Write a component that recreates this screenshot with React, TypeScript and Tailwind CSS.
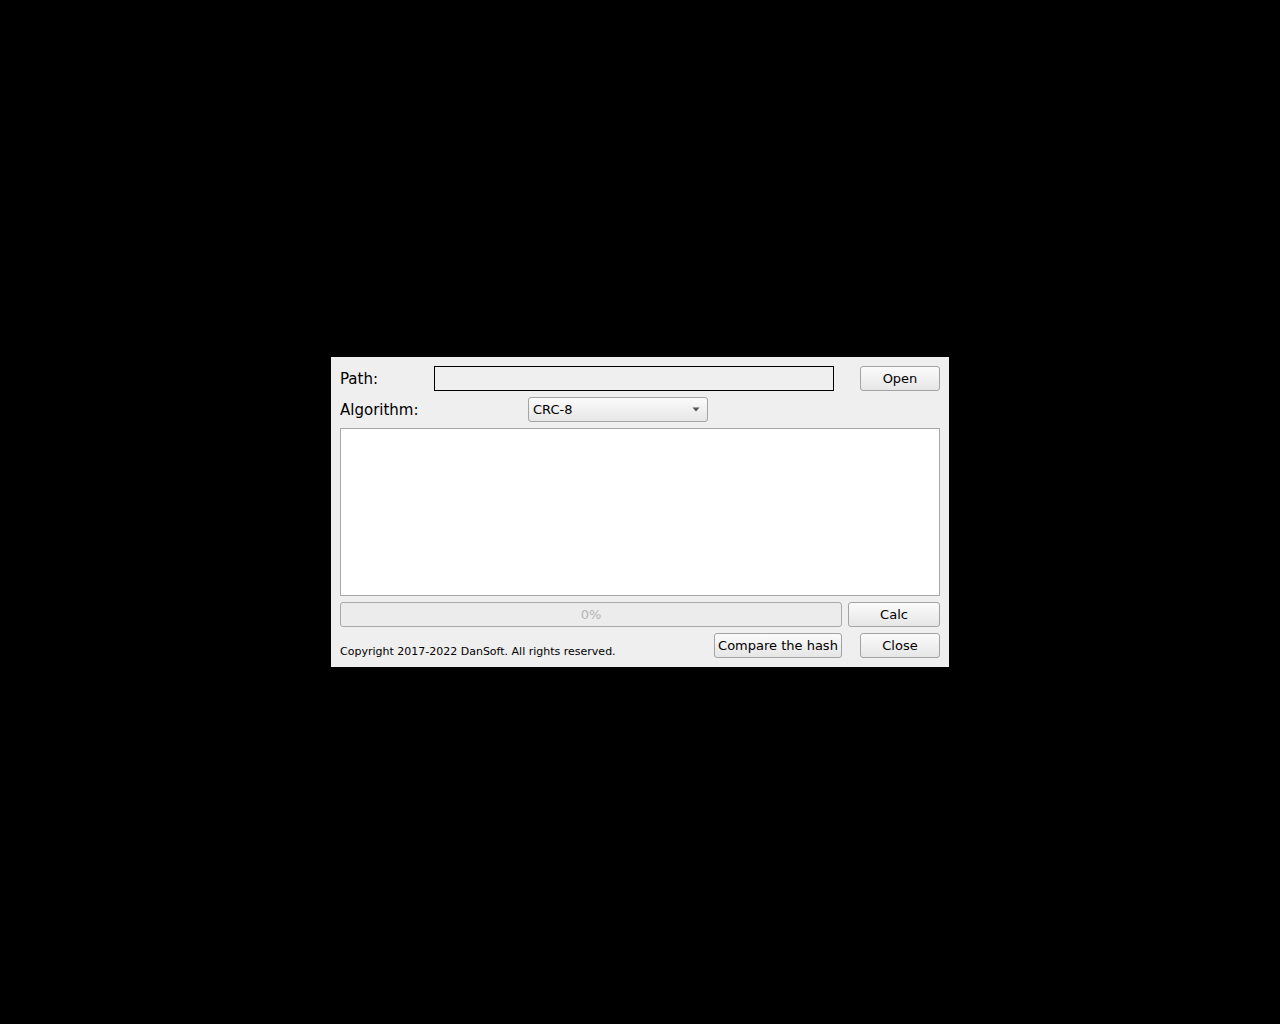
import React from "react";

const btn =
  "flex items-center justify-center h-[25px] rounded-[3px] border border-[#a3a3a3] bg-gradient-to-b from-[#fbfbfb] to-[#e6e6e6] text-[13px] text-black";

export default function App() {
  return (
    <div className="w-[1280px] h-[1024px] bg-black flex items-start justify-start" style={{ fontFamily: '"DejaVu Sans", sans-serif' }}>
      <div className="ml-[331px] mt-[357px] w-[618px] h-[310px] bg-[#efefef] px-[9px] pt-[9px] flex flex-col">
        <div className="flex items-center h-[25px]">
          <span className="w-[94px] text-[15px] text-black mt-[2px]">Path:</span>
          <div className="w-[400px] h-[25px] border border-black bg-[#efefef]" />
          <div className="flex-1" />
          <div className={btn + " w-[80px]"}>Open</div>
        </div>
        <div className="flex items-center h-[25px] mt-[6px]">
          <span className="w-[188px] text-[15px] text-black mt-[1px]">Algorithm:</span>
          <div className="w-[180px] h-[25px] rounded-[3px] border border-[#a3a3a3] bg-gradient-to-b from-[#fbfbfb] to-[#e6e6e6] flex items-center pl-[4px] pr-[8px] text-[13px] text-black">
            <span className="flex-1">CRC-8</span>
            <svg width="8" height="5" viewBox="0 0 8 5" className="mr-[-1px]"><path d="M0.5 0.5 H7.5 L4 4.5 Z" fill="#555" /></svg>
          </div>
        </div>
        <div className="mt-[6px] h-[168px] w-[600px] bg-white border border-[#a8a8a8]" />
        <div className="flex items-center h-[25px] mt-[6px]">
          <div className="w-[502px] h-[25px] rounded-[3px] border border-[#a8a8a8] bg-[#ececec] flex items-center justify-center text-[13px] text-[#b4b4b4]">0%</div>
          <div className={btn + " w-[92px] ml-[6px]"}>Calc</div>
        </div>
        <div className="flex items-center h-[25px] mt-[6px]">
          <span className="text-[11px] text-black mt-[14px]">Copyright 2017-2022 DanSoft. All rights reserved.</span>
          <div className="flex-1" />
          <div className={btn + " w-[128px]"}>Compare the hash</div>
          <div className={btn + " w-[80px] ml-[18px]"}>Close</div>
        </div>
      </div>
    </div>
  );
}
